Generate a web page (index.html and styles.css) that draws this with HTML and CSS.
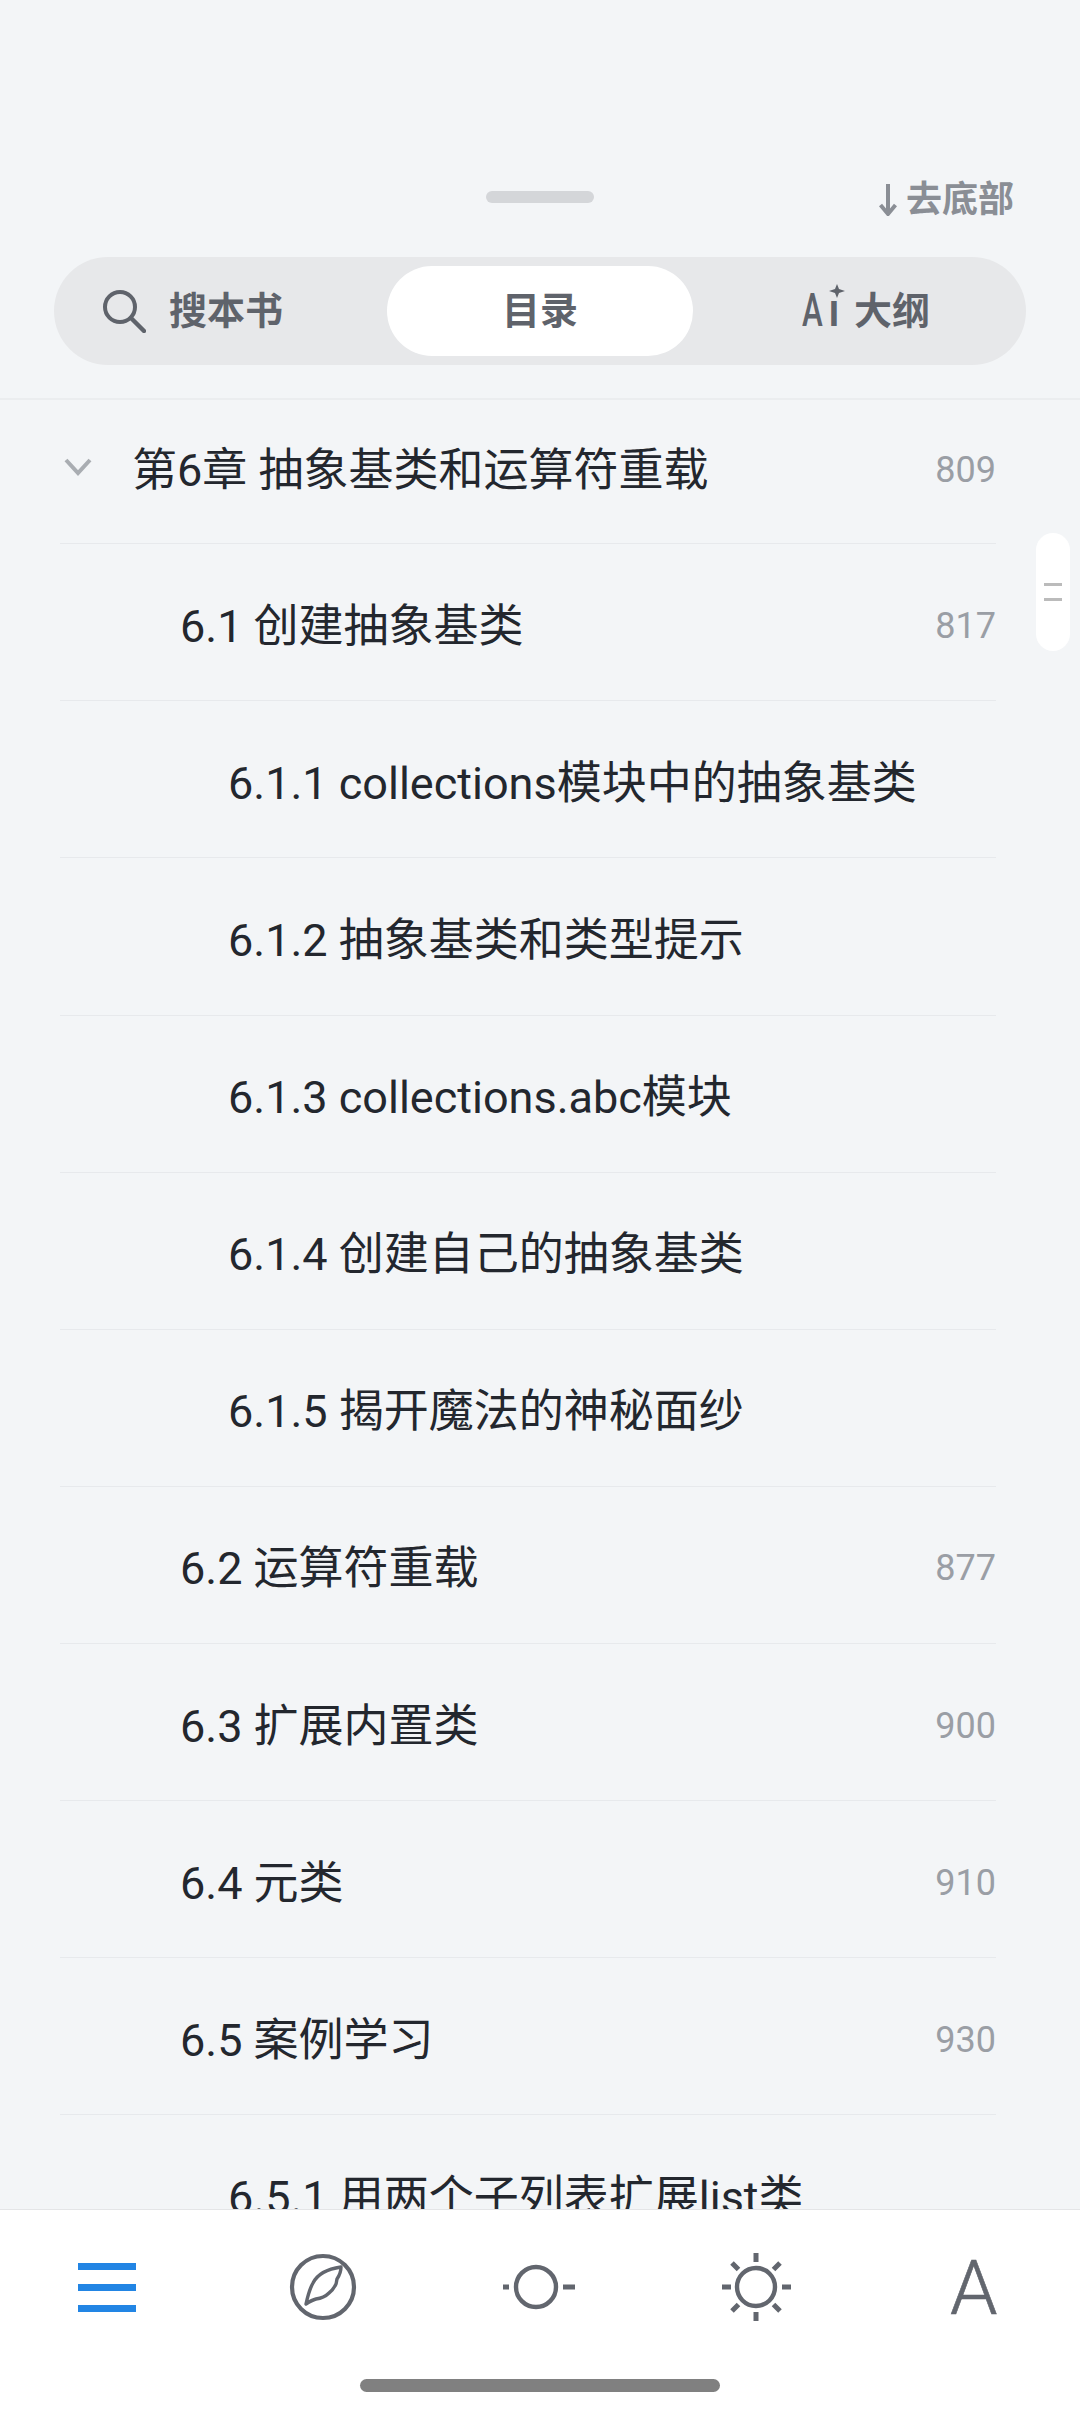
FILE: index.html
```html
<!DOCTYPE html>
<html lang="zh-CN">
<head>
    <meta charset="UTF-8">
    <meta name="viewport" content="width=device-width, initial-scale=1.0">
    <title>目录</title>
    <link rel="stylesheet" href="styles.css">
</head>
<body>
<div class="page">
    <div class="sheet-head">
        <div class="handle-row">
            <div class="handle"></div>
            <div class="to-bottom">
                <svg width="18" height="32" viewBox="0 0 18 32"><path d="M9 0V30M1.5 21L9 30L16.5 21" fill="none" stroke="#8a8e95" stroke-width="4"/></svg>
                <span>去底部</span>
            </div>
        </div>
        <div class="tabs">
            <div class="tab tab-search">
                <svg width="44" height="44" viewBox="0 0 44 44"><circle cx="18" cy="18" r="15" fill="none" stroke="#5f636b" stroke-width="4"/><path d="M29 29L42 42" stroke="#5f636b" stroke-width="4.4" stroke-linecap="round"/></svg>
                <span class="tab-label">搜本书</span>
            </div>
            <div class="tab active"><span class="tab-label">目录</span></div>
            <div class="tab tab-outline">
                <span class="ai-mark"><span class="ai-a">A</span><span class="ai-i">ı</span><svg class="ai-star" width="16" height="14" viewBox="0 0 16 14"><path d="M8 0L10 5L16 7L10 9L8 14L6 9L0 7L6 5Z" fill="#5f636b"/></svg></span>
                <span class="tab-label">大纲</span>
            </div>
        </div>
    </div>

    <div class="toc">
        <div class="toc-row first">
            <svg class="chevron" width="28" height="18" viewBox="0 0 28 18"><path d="M2 2L14 15L26 2" fill="none" stroke="#a9adb2" stroke-width="4"/></svg>
            <span class="toc-title">第6章 抽象基类和运算符重载</span><span class="toc-page">809</span>
        </div>
        <div class="toc-row lvl2"><span class="toc-title">6.1 创建抽象基类</span><span class="toc-page">817</span></div>
        <div class="toc-row lvl3"><span class="toc-title">6.1.1 collections模块中的抽象基类</span></div>
        <div class="toc-row lvl3"><span class="toc-title">6.1.2 抽象基类和类型提示</span></div>
        <div class="toc-row lvl3"><span class="toc-title">6.1.3 collections.abc模块</span></div>
        <div class="toc-row lvl3"><span class="toc-title">6.1.4 创建自己的抽象基类</span></div>
        <div class="toc-row lvl3"><span class="toc-title">6.1.5 揭开魔法的神秘面纱</span></div>
        <div class="toc-row lvl2"><span class="toc-title">6.2 运算符重载</span><span class="toc-page">877</span></div>
        <div class="toc-row lvl2"><span class="toc-title">6.3 扩展内置类</span><span class="toc-page">900</span></div>
        <div class="toc-row lvl2"><span class="toc-title">6.4 元类</span><span class="toc-page">910</span></div>
        <div class="toc-row lvl2"><span class="toc-title">6.5 案例学习</span><span class="toc-page">930</span></div>
        <div class="toc-row lvl3"><span class="toc-title">6.5.1 用两个子列表扩展list类</span></div>
        <div class="scroll-thumb"><i></i><i></i></div>
    </div>

    <div class="bottom-bar">
        <div class="tools">
            <div class="tool-menu"><i></i><i></i><i></i></div>
            <svg class="tool-compass" width="68" height="68" viewBox="0 0 68 68">
                <circle cx="34" cy="34" r="31" fill="none" stroke="#62666e" stroke-width="4.2"/>
                <path d="M17 51C19 42 21 35 24 30C28 22 38 16 52 14C52 19 50 23 48 26C47.5 28 47.5 30 47 31C45 35 43 38 40 40C36 44 31 45.5 27 46C23 47 20 49 17 51Z" fill="none" stroke="#62666e" stroke-width="3.4" stroke-linejoin="round"/>
            </svg>
            <svg class="tool-dim" width="74" height="50" viewBox="0 0 74 50">
                <circle cx="34" cy="25" r="20" fill="none" stroke="#62666e" stroke-width="4.4"/>
                <path d="M1 25H7M61 25H73" stroke="#62666e" stroke-width="5"/>
            </svg>
            <svg class="tool-sun" width="72" height="72" viewBox="0 0 72 72">
                <circle cx="36" cy="36" r="19" fill="none" stroke="#62666e" stroke-width="4.4"/>
                <path d="M36 2V11M36 61V70M2 36H11M62 36H71M12 12L18.5 18.5M60 12L53.5 18.5M12 60L18.5 53.5M60 60L53.5 53.5" stroke="#62666e" stroke-width="5"/>
            </svg>
            <span class="tool-font">A</span>
        </div>
        <div class="home-bar"></div>
    </div>
</div>
</body>
</html>
```

FILE: styles.css
```css
* {
    box-sizing: border-box;
}

body {
    margin: 0;
    padding: 0;
    background-color: #f3f5f7;
    font-family: Roboto, "Noto Sans CJK SC", sans-serif;
}

.page {
    width: 1080px;
    height: 2412px;
    display: flex;
    flex-direction: column;
    overflow: hidden;
}

.sheet-head {
    height: 400px;
    flex: none;
    padding: 164px 54px 0;
    border-bottom: 2px solid #ebedef;
}

.handle-row {
    position: relative;
    height: 66px;
    display: flex;
    justify-content: center;
    padding-top: 27px;
}

.handle {
    width: 108px;
    height: 12px;
    border-radius: 6px;
    background-color: #d4d6d9;
}

.to-bottom {
    position: absolute;
    right: 12px;
    top: 19px;
    display: flex;
    align-items: center;
    gap: 9px;
    font-size: 36px;
    line-height: 34px;
    font-weight: 700;
    color: #8a8e95;
}

.tabs {
    margin-top: 27px;
    height: 108px;
    padding: 9px;
    border-radius: 54px;
    background-color: #e7e8ea;
    display: grid;
    grid-template-columns: 324px 306px 1fr;
    font-size: 38px;
    font-weight: 700;
    color: #5f636b;
}

.tab {
    display: flex;
    align-items: center;
    justify-content: center;
}

.tab-label {
    padding-bottom: 8px;
}

.tab.active {
    background-color: #fff;
    border-radius: 45px;
}

.tab-search {
    justify-content: flex-start;
    padding-left: 39px;
    gap: 23px;
}

.tab-outline {
    padding-left: 22px;
    gap: 13px;
}

.ai-mark {
    position: relative;
    display: flex;
    width: 39px;
    height: 54px;
    font-size: 46px;
    font-weight: 500;
    line-height: 54px;
    margin-top: -2px;
}

.ai-a {
    display: block;
    width: 26px;
    transform: scaleX(0.68);
    transform-origin: left;
}

.ai-star {
    position: absolute;
    right: -4px;
    top: 1px;
}

.toc {
    position: relative;
    flex: 1;
    min-height: 0;
    overflow: hidden;
}

.toc-row {
    height: 157.1px;
    margin: 0 84px 0 60px;
    display: flex;
    align-items: center;
    border-bottom: 1px solid #e7e9ec;
    font-size: 45px;
    color: #23272e;
}

.toc-row.first {
    height: 144.3px;
    padding-bottom: 10px;
}

.toc-row.lvl2 {
    padding-left: 120px;
}

.toc-row.lvl3 {
    padding-left: 168px;
}

.chevron {
    margin: 0 40px 0 4px;
    flex: none;
}

.toc-title {
    flex: 1;
    white-space: nowrap;
}

.toc-page {
    margin-top: 7px;
    font-size: 36px;
    color: #9a9ea5;
}

.scroll-thumb {
    position: absolute;
    right: 10px;
    top: 133px;
    width: 34px;
    height: 118px;
    border-radius: 17px;
    background-color: #fff;
    display: flex;
    flex-direction: column;
    justify-content: center;
    align-items: center;
    gap: 12px;
}

.scroll-thumb i {
    width: 18px;
    height: 3px;
    background-color: #bbb;
}

.bottom-bar {
    height: 203px;
    flex: none;
    background-color: #fff;
    border-top: 1px solid #e4e5e7;
    position: relative;
}

.tools {
    height: 154px;
    padding-left: 78px;
    display: flex;
    align-items: center;
    position: relative;
}

.tool-menu {
    width: 58px;
    display: flex;
    flex-direction: column;
    gap: 14px;
}

.tool-menu i {
    height: 7px;
    background-color: #2285e4;
}

.tool-compass {
    margin-left: 153px;
}

.tool-dim {
    margin-left: 145px;
}

.tool-sun {
    margin-left: 144px;
}

.tool-font {
    margin-left: 158px;
    padding-top: 2px;
    font-size: 76px;
    font-weight: 300;
    line-height: 79px;
    -webkit-text-stroke: 0.6px #62666e;
    color: #62666e;
}

.home-bar {
    position: absolute;
    left: 360px;
    top: 169px;
    width: 360px;
    height: 13px;
    border-radius: 7px;
    background-color: #808080;
}
```
